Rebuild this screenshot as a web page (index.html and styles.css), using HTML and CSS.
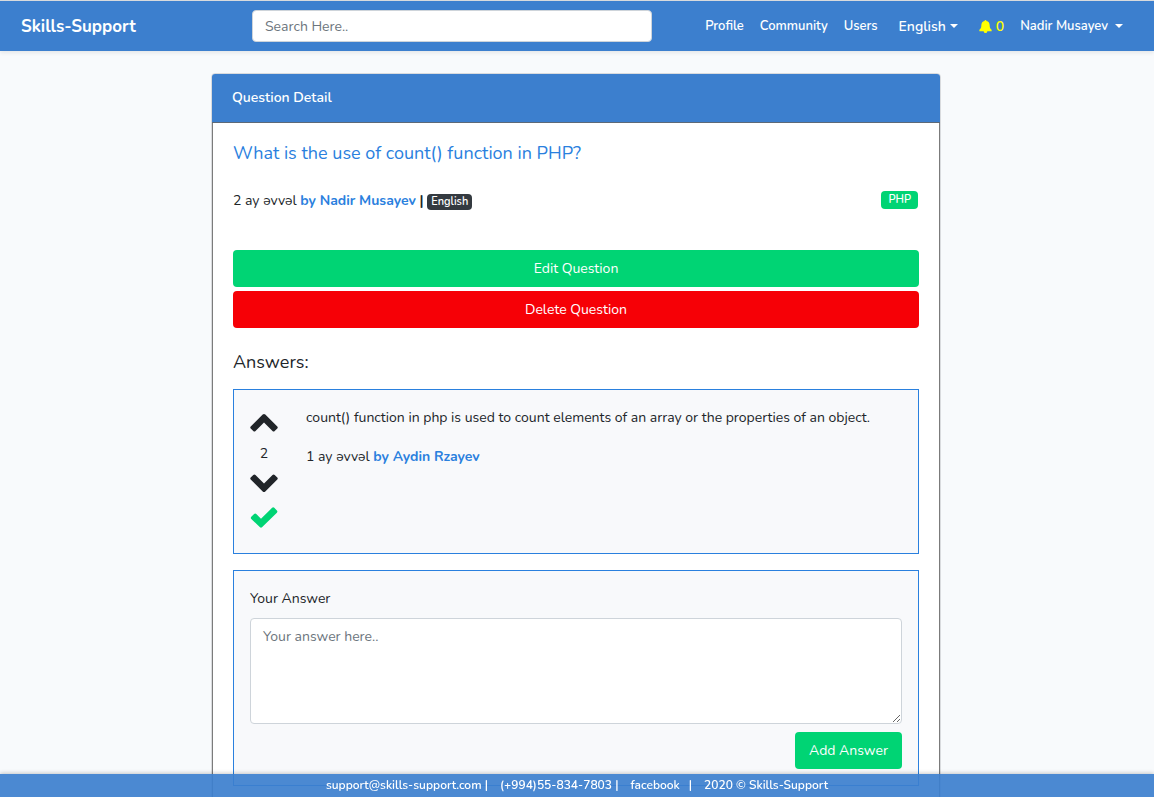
FILE: index.html
```html
<!DOCTYPE html>
<html lang="en">
<head>
<meta charset="utf-8">
<meta name="viewport" content="width=device-width, initial-scale=1">
<title>Question Detail - Skills-Support</title>
<link rel="stylesheet" href="styles.css">
</head>
<body>
<header class="navbar">
  <a class="brand" href="#">Skills-Support</a>
  <form class="search"><input class="control search-input" type="search" placeholder="Search Here.." aria-label="Search"></form>
  <nav class="nav">
    <a class="nav-link" href="#">Profile</a>
    <a class="nav-link" href="#">Community</a>
    <a class="nav-link" href="#">Users</a>
    <button class="nav-link language" type="button">English<span class="caret"></span></button>
    <a class="nav-link alerts" href="#" aria-label="Notifications: 0"><svg class="bell" viewBox="0 0 14 14" aria-hidden="true"><path d="M6 1.2Q6 0 7 0T8 1.2C10.500 1.700 11.500 3.600 11.500 6C11.500 8.700 12.200 9.300 13.600 10.600V12H.4V10.600C1.800 9.300 2.500 8.700 2.500 6C2.500 3.600 3.500 1.700 6 1.200ZM5 12H9Q8.800 14 7 14T5 12Z"/></svg>0</a>
    <button class="nav-link" type="button">Nadir Musayev<span class="caret user-caret"></span></button>
  </nav>
</header>
<main class="page">
  <section class="card">
    <h1 class="card-header">Question Detail</h1>
    <div class="card-body">
      <h2 class="title">What is the use of count() function in PHP?</h2>
      <div class="meta">
        <div>2 ay əvvəl <a class="author" href="#">by Nadir Musayev</a> <b>|</b> <span class="badge">English</span></div>
        <a class="badge tag" href="#">PHP</a>
      </div>
      <div class="actions">
        <button class="btn" type="button">Edit Question</button>
        <button class="btn danger" type="button">Delete Question</button>
      </div>
      <h3 class="subtitle">Answers:</h3>
      <article class="panel answer">
        <div class="votes">
          <button class="vote" type="button" aria-label="Vote up"><svg class="arrow" viewBox="0 0 28 18"><path d="M12.700 .6Q14-.5 15.300 .6L27.300 12.400Q28.200 13.500 27.300 14.500L24.700 17Q23.600 18 22.500 17L14 8.500L5.500 17Q4.400 18 3.300 17L.7 14.500Q-.2 13.500 .7 12.400Z"/></svg></button>
          <span class="count">2</span>
          <button class="vote" type="button" aria-label="Vote down"><svg class="arrow" viewBox="0 0 28 18"><path d="M12.700 17.400Q14 18.500 15.300 17.400L27.300 5.600Q28.200 4.500 27.300 3.500L24.700 1Q23.600 0 22.500 1L14 9.500L5.500 1Q4.400 0 3.300 1L.7 3.500Q-.2 4.500 .7 5.600Z"/></svg></button>
          <button class="vote accept" type="button" aria-label="Accepted answer"><svg class="check" viewBox="0 0 28 21"><path d="M10 20.300Q11 21.200 12 20.300L26.900 5.700Q27.900 4.600 26.900 3.500L24.300 .8Q23.200-.2 22.100 .8L11 11.800L6.300 7.100Q5.200 6.100 4.100 7.100L1.300 9.800Q.3 10.900 1.300 12Z"/></svg></button>
        </div>
        <div class="answer-text">
          <p class="text">count() function in php is used to count elements of an array or the properties of an object.</p>
          <p class="text">1 ay əvvəl <a class="author" href="#">by Aydin Rzayev</a></p>
        </div>
      </article>
      <form class="panel">
        <label class="label" for="answer">Your Answer</label>
        <textarea class="control answer-input" id="answer" placeholder="Your answer here.."></textarea>
        <button class="btn submit" type="button">Add Answer</button>
      </form>
    </div>
  </section>
</main>
<footer class="footer">
  <span><a href="#">support@skills-support.com</a> |</span>
  <span><a href="#">(+994)55-834-7803</a> |</span>
  <a href="#">facebook</a><span class="bar">|</span>
  <span>2020 © Skills-Support</span>
</footer>
</body>
</html>
```
FILE: styles.css
```css
* { box-sizing: border-box; }
body {
  margin: 0;
  background: #f8fafc;
  color: #212529;
  font: 14px/23px Nunito, Lato, sans-serif;
}
a { color: inherit; text-decoration: none; }
h1, h2, h3, p { margin: 0; font-weight: 400; }
button, input, textarea { font: inherit; }
button { border: 0; cursor: pointer; }

.navbar {
  display: grid;
  grid-template-columns: 231px 400px 1fr;
  align-items: center;
  height: 51px;
  padding: 0 31px 0 21px;
  border-top: 1px solid #d8dadd;
  background: #3c7fce;
  color: #fff;
  box-shadow: 0 2px 4px rgba(0, 0, 0, .08);
}
.brand { font-size: 17px; font-weight: 700; }
.control {
  display: block;
  width: 100%;
  border: 1px solid #ced4da;
  border-radius: 4px;
  background: #fff;
  color: #495057;
  padding: 6px 12px;
}
.control::placeholder { color: #6c757d; opacity: 1; }
.search-input { height: 32px; padding: 0 12px; }
.nav { display: flex; justify-content: flex-end; align-items: center; gap: 16px; }
.nav-link {
  display: flex;
  align-items: center;
  padding: 0;
  background: none;
  color: #fff;
  font-size: 13px;
  font-weight: 600;
  white-space: nowrap;
}
.language { margin: 0 5px; font-size: 14px; }
.alerts { gap: 4px; color: #ff0; font-size: 14px; }
.bell { width: 13px; height: 13px; fill: #ff0; }
.caret {
  margin-left: 4px;
  border: 4px solid transparent;
  border-top-color: #fff;
  border-bottom: 0;
}
.user-caret { margin-left: 7px; }

.page { max-width: 762px; margin: 0 auto; padding: 22px 17px 40px 15px; }
.card {
  border: 1px solid #d9dbde;
  border-radius: 4px;
  background: #fff;
}
.card-header {
  padding: 12px 20px;
  border-bottom: 1px solid #5d6977;
  border-radius: 3px 3px 0 0;
  background: #3c7fce;
  color: #fff;
  font-size: 14px;
  line-height: 24px;
  font-weight: 600;
}
.card-body {
  padding: 20px;
  border: 1px solid #7b7b7b;
  border-top: 0;
}
.title { color: #2a80de; font-size: 18px; line-height: 20px; }
.meta {
  display: flex;
  justify-content: space-between;
  align-items: center;
  height: 24px;
  margin: 25px 0 38px;
}
.author { color: #2a80de; font-weight: 700; }
.badge {
  display: inline-block;
  padding: 0 4px;
  border-radius: 4px;
  background: #343a40;
  color: #fff;
  font-size: 11px;
  line-height: 16px;
  font-weight: 600;
}
.tag { margin-right: 1px; padding: 1px 7px; background: #00d474; }
.actions { display: grid; gap: 4px; }
.btn {
  padding: 7px 14px;
  border-radius: 4px;
  background: #00d474;
  color: #fff;
}
.danger { background: #f60006; }
.subtitle { margin: 22px 0 15px; font-size: 18px; line-height: 24px; }
.panel {
  padding: 16px;
  border: 1px solid #2a80de;
  background: #f8f9fb;
}
.answer {
  display: flex;
  gap: 28px;
  min-height: 165px;
  margin-bottom: 16px;
}
.votes { display: flex; flex-direction: column; align-items: center; padding-top: 8px; }
.vote { display: flex; padding: 0; background: none; fill: #212529; }
.accept { margin-top: 15px; fill: #00d474; }
.arrow { width: 28px; height: 18px; }
.check { width: 28px; height: 21px; }
.count { margin: 10px 0 9px; }
.answer-text { display: grid; align-content: start; gap: 16px; }
.label { display: block; margin-bottom: 8px; }
.answer-input { height: 106px; resize: vertical; }
.submit { display: block; margin: 8px 0 0 auto; }

.footer {
  position: fixed;
  inset: auto 0 0;
  display: flex;
  justify-content: center;
  gap: 12px;
  background: rgba(60, 127, 206, .92);
  color: #fff;
  font-size: 12px;
  font-weight: 600;
  box-shadow: 0 -1px 4px rgba(0, 0, 0, .2);
}
.bar { margin-left: -3px; }
```
